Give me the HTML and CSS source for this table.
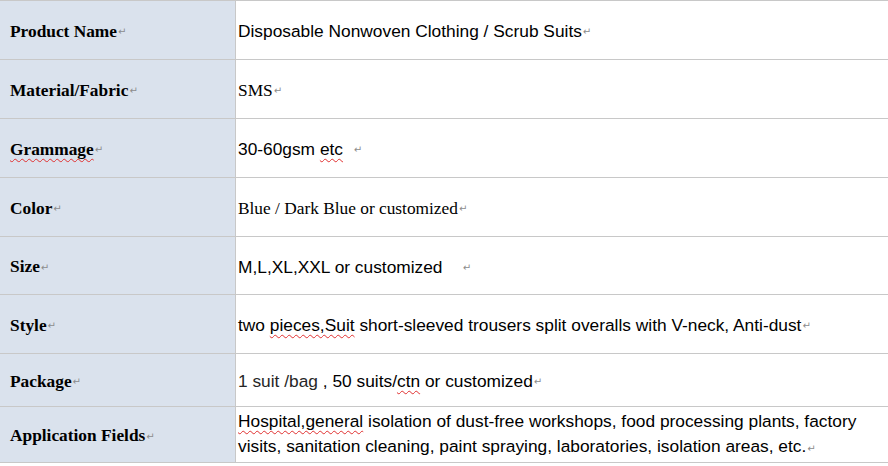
FILE: index.html
```html
<!DOCTYPE html>
<html lang="en">
<head>
<meta charset="utf-8">
<title>Product Specification</title>
<link rel="stylesheet" href="styles.css">
</head>
<body>
<div class="spec">
  <div class="row h58">
    <div class="label">Product Name<span class="pm">↵</span></div>
    <div class="value sans">Disposable Nonwoven Clothing / Scrub Suits<span class="pm">↵</span></div>
  </div>
  <div class="row h58">
    <div class="label">Material/Fabric<span class="pm">↵</span></div>
    <div class="value serif">SMS<span class="pm">↵</span></div>
  </div>
  <div class="row h58">
    <div class="label"><span class="sp">Grammage</span><span class="pm">↵</span></div>
    <div class="value sans">30-60gsm <span class="sp">etc</span>&nbsp;&nbsp;<span class="pm">↵</span></div>
  </div>
  <div class="row h58">
    <div class="label">Color<span class="pm">↵</span></div>
    <div class="value serif">Blue / Dark Blue or customized<span class="pm">↵</span></div>
  </div>
  <div class="row h57">
    <div class="label">Size<span class="pm">↵</span></div>
    <div class="value sans">M,L,XL,XXL or customized&nbsp;&nbsp;&nbsp;&nbsp;<span class="pm">↵</span></div>
  </div>
  <div class="row h58">
    <div class="label">Style<span class="pm">↵</span></div>
    <div class="value sans">two <span class="sp">pieces,Suit</span> short-sleeved trousers split overalls with V-neck, Anti-dust<span class="pm">↵</span></div>
  </div>
  <div class="row h52">
    <div class="label">Package<span class="pm">↵</span></div>
    <div class="value sans"><span class="soft">1 suit /bag</span> , 50 suits/<span class="sp">ctn</span> or customized<span class="pm">↵</span></div>
  </div>
  <div class="row h55">
    <div class="label">Application Fields<span class="pm">↵</span></div>
    <div class="value sans multi"><span class="sp">Hospital,general</span> isolation of dust-free workshops, food processing plants, factory visits, sanitation cleaning, paint spraying, laboratories, isolation areas, etc.<span class="pm">↵</span></div>
  </div>
</div>
</body>
</html>
```
FILE: styles.css
```css
html, body {
  margin: 0;
  padding: 0;
  background: #ffffff;
}

.spec {
  width: 888px;
  border-top: 1px solid #c8c8c8;
  color: #000;
}

.row {
  display: grid;
  grid-template-columns: 236px 1fr;
  border-bottom: 1px solid #c8c8c8;
}

.h58 { height: 58px; }
.h57 { height: 57px; }
.h52 { height: 52px; }
.h55 { height: 55px; }

.label {
  background: #dae2ed;
  border-right: 1px solid #c8c8c8;
  display: flex;
  align-items: center;
  padding: 3px 0 0 10px;
  font-family: "Liberation Serif", "Times New Roman", serif;
  font-weight: bold;
  font-size: 17.33px;
  white-space: nowrap;
}

.value {
  display: flex;
  align-items: center;
  padding: 3px 0 0 2px;
  font-size: 17.33px;
}

.value.multi {
  display: block;
  padding-top: 2px;
  line-height: 25px;
}

.sans {
  font-family: "Liberation Sans", Arial, sans-serif;
}

.serif {
  font-family: "Liberation Serif", "Times New Roman", serif;
}

.value.sans, .value.serif {
  white-space: pre-wrap;
}

.value.multi {
  white-space: normal;
}

.soft {
  color: #262626;
}

.sp {
  text-decoration: underline wavy #e03030;
  text-decoration-thickness: 1px;
  text-underline-offset: 3px;
  text-decoration-skip-ink: none;
}

.pm {
  font-family: "DejaVu Sans", sans-serif;
  font-weight: normal;
  font-size: 10px;
  color: #8c8c8c;
  margin-left: 1px;
}
```
